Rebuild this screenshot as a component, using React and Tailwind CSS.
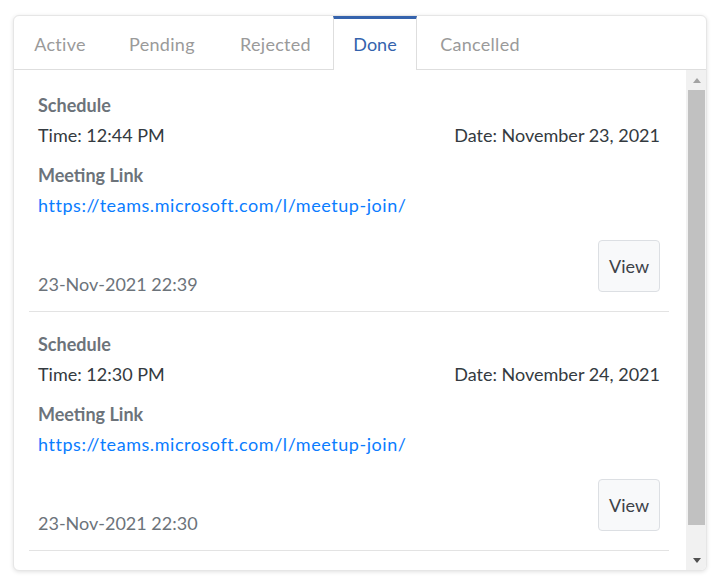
const tabs = [
  { label: "Active", w: "w-[92px]" },
  { label: "Pending", w: "w-[112px]" },
  { label: "Rejected", w: "w-[115px]" },
  { label: "Done", w: "w-[84px]" },
  { label: "Cancelled", w: "w-[126px]" },
];

const meetings = [
  { time: "12:44 PM", date: "November 23, 2021", created: "23-Nov-2021 22:39" },
  { time: "12:30 PM", date: "November 24, 2021", created: "23-Nov-2021 22:30" },
];

const MeetingItem = ({ item }) => (
  <div className="border-b border-[#e3e3e3] px-[9px] pt-[17px] pb-[19px]">
    <p className="text-[18px] leading-[30px] font-bold text-[#6c737a]">Schedule</p>
    <div className="flex justify-between text-[18px] leading-[30px] text-[#343a40]">
      <span>Time: {item.time}</span>
      <span>Date: {item.date}</span>
    </div>
    <p className="mt-[10px] text-[18px] leading-[30px] font-bold text-[#6c737a]">Meeting Link</p>
    <a href="#" className="block text-[18px] leading-[30px] tracking-[0.55px] text-[#0a7cff]">
      https://teams.microsoft.com/l/meetup-join/
    </a>
    <div className="mt-5 flex items-end justify-between">
      <span className="mb-[-7px] text-[18px] leading-[30px] text-[#6c737a]">{item.created}</span>
      <button className="h-[52px] w-[62px] rounded-[4px] border border-[#dcdfe3] bg-[#f8f9fa] text-[18px] text-[#3c4248]">
        View
      </button>
    </div>
  </div>
);

export default function App() {
  return (
    <div className="min-h-screen bg-white px-[13px] pt-[15px] font-['Lato','Liberation_Sans',sans-serif]">
      <div className="flex h-[556px] w-[694px] flex-col overflow-hidden rounded-[6px] border border-[#e6e6e6] bg-white shadow-[0_1px_4px_rgba(0,0,0,0.12)]">
        {/* tab strip */}
        <div className="flex h-[54px] shrink-0 border-b border-[#dedede]">
          {tabs.map((tab) =>
            tab.label === "Done" ? (
              <div
                key={tab.label}
                className={`-mb-px flex items-center justify-center border-x border-t-[3px] border-x-[#dedede] border-t-[#3563ad] bg-white text-[18px] text-[#3563ad] ${tab.w}`}
              >
                {tab.label}
              </div>
            ) : (
              <div
                key={tab.label}
                className={`flex items-center justify-center border-t-[3px] border-transparent text-[18px] tracking-[0.3px] text-[#9a9a9a] ${tab.w}`}
              >
                {tab.label}
              </div>
            )
          )}
        </div>

        <div className="flex min-h-0 flex-1">
          {/* list */}
          <div className="min-w-0 flex-1 overflow-hidden pl-[15px] pr-[17px] pt-[3px] pb-12">
            {meetings.map((m, i) => (
              <MeetingItem key={i} item={m} />
            ))}
          </div>

          {/* scrollbar */}
          <div className="flex w-[20px] shrink-0 flex-col bg-[#f1f1f1] pl-[2px] pr-[1px]">
            <div className="flex h-[20px] items-center justify-center">
              <svg width="8" height="5" viewBox="0 0 8 5">
                <path d="M0 5 L4 0 L8 5 Z" fill="#a3a3a3" />
              </svg>
            </div>
            <div className="h-[435px] bg-[#c1c1c1]" />
            <div className="flex-1" />
            <div className="flex h-[20px] items-center justify-center">
              <svg width="8" height="5" viewBox="0 0 8 5">
                <path d="M0 0 L8 0 L4 5 Z" fill="#505050" />
              </svg>
            </div>
          </div>
        </div>
      </div>
    </div>
  );
}
